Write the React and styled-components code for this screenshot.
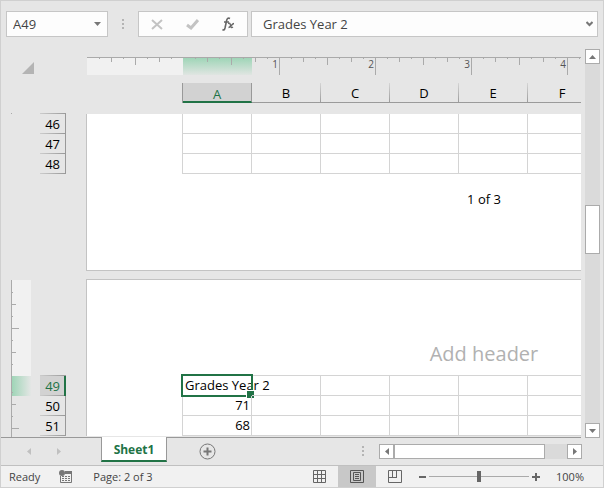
import React, { useState } from 'react'
import styled, { createGlobalStyle, css } from 'styled-components'

const GlobalStyle = createGlobalStyle`
  * {
    box-sizing: border-box;
  }
  body {
    margin: 0;
    background: #e6e6e6;
    color: #000;
    font-family: 'Open Sans', 'Noto Sans', sans-serif;
    font-size: 13px;
  }
  button, input {
    font: inherit;
    color: inherit;
    margin: 0;
    padding: 0;
    border: none;
    background: none;
  }
`

const Window = styled.div`
  display: flex;
  flex-direction: column;
  height: 100vh;
  border: 1px solid #d0d0d0;
  overflow: hidden;
`

/* formula bar */

const FormulaBar = styled.div`
  display: flex;
  flex: none;
  padding: 10px 5px 0;
`
const Box = styled.div`
  display: flex;
  align-items: center;
  height: 26px;
  background: #fdfdfd;
  border: 1px solid #c6c6c6;
  color: #444;
`
const NameBox = styled(Box)`
  width: 102px;
  padding: 0 6px;
`
const ActionBox = styled(Box)`
  width: 110px;
  justify-content: space-between;
  padding: 0 12px;
  margin-right: 3px;
`
const FormulaBox = styled(Box)`
  flex: 1;
  min-width: 0;
  padding: 0 4px 0 11px;
`
const TextInput = styled.input`
  flex: 1;
  width: 0;
  outline: none;
`
const IconButton = styled.button`
  display: flex;
  align-items: center;
  justify-content: center;
  flex: none;
`
const Dots = styled.span`
  width: 2px;
  height: 11px;
  margin: 8px 14px 0;
  background: repeating-linear-gradient(#b4b4b4 0 2px, transparent 2px 4px);
`

/* workspace */

const Workspace = styled.div`
  display: flex;
  flex: 1;
  min-height: 0;
`
const SheetArea = styled.div`
  flex: 1;
  min-width: 0;
  padding-top: 20px;
  border-bottom: 1px solid #999;
  overflow: hidden;
`
const Heading = styled.div`
  display: flex;
  margin-bottom: 10px;
`
const Corner = styled.div`
  flex: none;
  width: 86px;
  padding: 5px 0 0 21px;
`
const HeadingTracks = styled.div`
  flex: 1;
  min-width: 0;
  overflow: hidden;
`
const Ruler = styled.div`
  display: flex;
  height: 18px;
  margin-bottom: 8px;
  border-top: 1px solid #aaa;
`
const Inch = styled.div`
  flex: none;
  width: 96px;
  padding-right: 1px;
  text-align: right;
  font-size: 10px;
  line-height: 12px;
  color: #555;
  border-left: ${props => props.$mark ? '1px solid #aaa' : 'none'};
  background-color: ${props => props.$margin ? '#f1f1f1' : 'transparent'};
  background-image:
    linear-gradient(#aaa, #aaa), linear-gradient(#aaa, #aaa),
    linear-gradient(#aaa, #aaa), linear-gradient(#aaa, #aaa),
    linear-gradient(#aaa, #aaa), linear-gradient(#aaa, #aaa),
    linear-gradient(#aaa, #aaa), linear-gradient(#9fd5b7, #e0e5e2);
  background-origin: border-box;
  background-repeat: no-repeat;
  background-size:
    1px 1px, 1px 4px, 1px 1px, 1px 7px, 1px 1px, 1px 4px, 1px 1px,
    ${props => props.$active ? '69px 17px' : '0 0'};
  background-position: 12px 0, 24px 0, 36px 0, 48px 0, 60px 0, 72px 0, 84px 0, 0 0;
`
const ColumnHeaders = styled.div`
  display: flex;
  margin-left: 95px;
  height: 20px;
  border-left: 1px solid #999;
`
const ColumnHeader = styled.button`
  flex: none;
  width: 69px;
  padding-top: 1px;
  line-height: 18px;
  border-right: 1px solid;
  border-bottom: 1px solid #999;
  border-image: linear-gradient(#d8d8d8, #999) 1;
  ${props => props.$active && css`
    padding-top: 2px;
    color: #217346;
    background: #d2d2d2;
    border-image: none;
    border-right-color: #999;
    border-bottom: 2px solid #217346;
  `}
`

const PageRow = styled.div`
  display: flex;
  align-items: flex-start;
`
const RulerGutter = styled.div`
  flex: none;
  width: 39px;
  padding: ${props => props.$first ? '0' : '1px'} 0 0 10px;
`
const SideRuler = styled.div`
  width: 20px;
  border-left: 1px solid #aaa;
  height: ${props => props.$collapsed ? '1px' : 'auto'};
`
const SideInch = styled.div`
  height: 96px;
  background-color: ${props => props.$margin ? '#f1f1f1' : 'transparent'};
  background-image:
    linear-gradient(#aaa, #aaa), linear-gradient(#aaa, #aaa),
    linear-gradient(#aaa, #aaa), linear-gradient(#aaa, #aaa),
    linear-gradient(#aaa, #aaa), linear-gradient(#aaa, #aaa),
    linear-gradient(#aaa, #aaa);
  background-repeat: no-repeat;
  background-size: 1px 1px, 4px 1px, 1px 1px, 7px 1px, 1px 1px, 4px 1px, 1px 1px;
  background-position: 0 12px, 0 24px, 0 36px, 0 48px, 0 60px, 0 72px, 0 84px;
`
const SideBody = styled.div`
  padding-top: 4px;
  background: linear-gradient(to right, #9fd5b7, #e4e6e5) no-repeat;
  background-size: 100% 20px;
`
const RowHeaders = styled.div`
  display: flex;
  flex-direction: column;
  flex: none;
  width: 26px;
  margin: ${props => props.$first ? '0' : '96px'} 20px 0 0;
  padding-top: 1px;
  background: linear-gradient(to right, #ccc, #999) no-repeat;
  background-size: 100% 1px;
`
const RowHeader = styled.button`
  height: 20px;
  padding-right: 5px;
  line-height: 20px;
  text-align: right;
  border-right: 1px solid #999;
  background: linear-gradient(to right, #ccc, #999) no-repeat bottom;
  background-size: 100% 1px;
  ${props => props.$active && css`
    padding-right: 4px;
    color: #217346;
    border-right: 2px solid #217346;
    background-color: #d2d2d2;
  `}
`
const PaperClip = styled.div`
  flex: 1;
  min-width: 0;
  margin-bottom: 8px;
  padding-top: ${props => props.$first ? '1px' : '0'};
  overflow: hidden;
`
const Paper = styled.div`
  width: 796px;
  background: #fff;
  border: 1px solid #c3c3c3;
  border-width: ${props => props.$first ? '0 1px 1px' : '1px 1px 0'};
`
const PageHeader = styled.div`
  height: 95px;
  padding-top: 59px;
  font-size: 20px;
  line-height: 30px;
  text-align: center;
  color: #b1b1b1;
`
const PageFooter = styled.div`
  height: 96px;
  padding-top: 15px;
  line-height: 20px;
  text-align: center;
`
const Grid = styled.table`
  table-layout: fixed;
  width: 415px;
  margin-left: 95px;
  border-spacing: 0;
  border-left: 1px solid #d4d4d4;
  border-top: ${props => props.$first ? 'none' : '1px solid #d4d4d4'};
`
const Cell = styled.td`
  position: relative;
  height: 20px;
  padding: 0 1px 0 2px;
  line-height: 19px;
  white-space: nowrap;
  text-align: ${props => props.$number ? 'right' : 'left'};
  border-right: 1px solid #d4d4d4;
  border-bottom: 1px solid #d4d4d4;
`
const Selection = styled.span`
  position: absolute;
  inset: -2px;
  border: 2px solid #217346;
  pointer-events: none;
  &::after {
    content: '';
    position: absolute;
    right: -4px;
    bottom: -4px;
    width: 7px;
    height: 7px;
    background: #217346;
    border: 1px solid #fff;
  }
`

/* scroll bars */

const ScrollBar = styled.div`
  display: flex;
  flex: none;
  flex-direction: ${props => props.$horizontal ? 'row' : 'column'};
  background: #dadada;
  ${props => props.$horizontal ? css`
    width: 203px;
    height: 15px;
    margin: 6px 21px 0 1px;
  ` : css`
    width: 15px;
    margin: 12px 3px 0 4px;
  `}
`
const ScrollButton = styled(IconButton)`
  width: 15px;
  height: 15px;
  background: #fff;
  border: 1px solid #ababab;
`
const Thumb = styled.div`
  flex: none;
  background: #fff;
  border: 1px solid #ababab;
  ${props => props.$horizontal ? 'width: 151px;' : 'height: 49px;'}
`
const Track = styled.div`
  flex: ${props => props.$grow};
`

/* bottom bars */

const SheetBar = styled.div`
  display: flex;
  flex: none;
  height: 28px;
  border-bottom: 1px solid #c0c0c0;
`
const SheetNav = styled.div`
  display: flex;
  width: 100px;
  padding: 0 40px 1px 26px;
  justify-content: space-between;
`
const Tab = styled.button`
  position: relative;
  height: 25px;
  width: 66px;
  margin-top: -1px;
  padding-top: 2px;
  font-weight: bold;
  font-size: 12px;
  color: #217346;
  background: #fff;
  border-left: 1px solid #999;
  border-right: 1px solid #999;
  border-bottom: 2px solid #217346;
`
const AddButton = styled(IconButton)`
  height: 26px;
  margin: 0 auto 0 32px;
`
const StatusBar = styled.div`
  display: flex;
  align-items: center;
  flex: none;
  height: 21px;
  padding: 0 19px 0 8px;
  background: #f1f1f1;
  color: #444;
  font-size: 11px;
`
const MacroButton = styled(IconButton)`
  margin: 0 21px 0 19px;
`
const Views = styled.div`
  display: flex;
  align-self: stretch;
  margin: 0 4px 0 auto;
`
const ViewButton = styled(IconButton)`
  width: 38px;
  background: ${props => props.$active ? '#c8c8c8' : 'none'};
`
const ZoomButton = styled(IconButton)`
  width: 9px;
  height: 20px;
`
const ZoomSlider = styled.input`
  appearance: none;
  width: 100px;
  height: 12px;
  margin: 0 2px;
  background: linear-gradient(#aaa, #aaa) no-repeat center;
  background-size: 100% 1px;
  &::-webkit-slider-thumb {
    appearance: none;
    width: 4px;
    height: 11px;
    background: #666;
  }
`
const ZoomLabel = styled.span`
  width: 28px;
  margin-left: 16px;
`

const arrows = {
  up: '0,4 7,4 3.5,0',
  down: '0,0 7,0 3.5,4',
  left: '4,0 4,7 0,3.5',
  right: '0,0 0,7 4,3.5'
}

const Arrow = ({ to, color = '#777' }) => {
  const flat = to === 'up' || to === 'down'
  return (
    <svg width={flat ? 7 : 4} height={flat ? 4 : 7} aria-hidden='true'>
      <polygon points={arrows[to]} fill={color} />
    </svg>
  )
}

const GridIcon = () => (
  <svg width='13' height='13' fill='none' stroke='#666' aria-hidden='true'>
    <path d='M.5 .5h12v12H.5zM4.5 0v13M8.5 0v13M0 4.5h13M0 8.5h13' />
  </svg>
)

const LayoutIcon = () => (
  <svg width='14' height='13' fill='none' stroke='#555' aria-hidden='true'>
    <path d='M.5 .5h13v12H.5zM3.5 2.5h7v8h-7zM5 4.5h4M5 6.5h4M5 8.5h4' />
  </svg>
)

const BreakIcon = () => (
  <svg width='14' height='13' fill='none' stroke='#666' aria-hidden='true'>
    <path d='M.5 .5h13v12H.5zM4.5 0v7M8.5 0v7M1 7.5h8' />
  </svg>
)

const MacroIcon = () => (
  <svg width='13' height='13' aria-hidden='true'>
    <path d='M6 1h7v3H6z' fill='#777' />
    <path d='M1.5 6v6.5h11V3' fill='none' stroke='#777' />
    <circle cx='3' cy='3' r='3' fill='#777' />
    <path d='M3 6.5h8M3 8.5h8M3 10.5h8' stroke='#777' strokeDasharray='2 1' />
  </svg>
)

const columns = ['A', 'B', 'C', 'D', 'E', 'F']

const pages = [
  { rows: [{ number: 46 }, { number: 47 }, { number: 48 }], footer: '1 of 3' },
  {
    rows: [
      { number: 49, value: 'Grades Year 2' },
      { number: 50, value: 71 },
      { number: 51, value: 68 }
    ],
    header: 'Add header'
  }
]

const Page = ({ page, first, active, onSelect }) => (
  <PageRow>
    <RulerGutter $first={first}>
      <SideRuler $collapsed={first}>
        {!first && <>
          <SideInch $margin />
          <SideBody><SideInch /></SideBody>
        </>}
      </SideRuler>
    </RulerGutter>
    <RowHeaders $first={first}>
      {page.rows.map(row => (
        <RowHeader
          key={row.number}
          $active={row.number === active}
          onClick={() => onSelect(row.number)}
        >
          {row.number}
        </RowHeader>
      ))}
    </RowHeaders>
    <PaperClip $first={first}>
      <Paper $first={first}>
        {page.header && <PageHeader>{page.header}</PageHeader>}
        <Grid $first={first}>
          <tbody>
            {page.rows.map(row => (
              <tr key={row.number}>
                {columns.map((column, index) => (
                  <Cell key={column} $number={typeof row.value === 'number'}>
                    {index === 0 && row.value}
                    {index === 0 && row.number === active && <Selection />}
                  </Cell>
                ))}
              </tr>
            ))}
          </tbody>
        </Grid>
        {page.footer && <PageFooter>{page.footer}</PageFooter>}
      </Paper>
    </PaperClip>
  </PageRow>
)

const App = () => {
  const [active, setActive] = useState(49)
  const [zoom, setZoom] = useState(100)

  const row = pages.flatMap(page => page.rows).find(r => r.number === active)

  return (
    <Window>
      <GlobalStyle />
      <FormulaBar>
        <NameBox>
          <TextInput aria-label='Name box' value={`A${active}`} readOnly />
          <IconButton aria-label='Names'><Arrow to='down' /></IconButton>
        </NameBox>
        <Dots />
        <ActionBox>
          <IconButton aria-label='Cancel'>
            <svg width='12' height='11' fill='none' stroke='#c3c3c3' strokeWidth='2'>
              <path d='M1 1l10 9M11 1L1 10' />
            </svg>
          </IconButton>
          <IconButton aria-label='Enter'>
            <svg width='13' height='11' fill='none' stroke='#c3c3c3' strokeWidth='3'>
              <path d='M1 6l4 3L12 1' />
            </svg>
          </IconButton>
          <IconButton aria-label='Insert function'>
            <svg width='13' height='14' fill='none' stroke='#666'>
              <path d='M8 1.5C6 .5 5 1.5 4.5 4L3 11c-.5 2-1 2.500-2.500 1.500M2 5h5' strokeWidth='1.600' />
              <path d='M6 6.500c2-1 2 0 2.500 2s1 2.500 2.500 1.500M12 6.500c-2 0-3.500 4-5.500 4' strokeWidth='1.400' />
            </svg>
          </IconButton>
        </ActionBox>
        <FormulaBox>
          <TextInput aria-label='Formula bar' value={row.value || ''} readOnly />
          <IconButton aria-label='Expand formula bar'>
            <svg width='7' height='6' fill='none' stroke='#777' strokeWidth='2'>
              <path d='M.5 1l3 3 3-3' />
            </svg>
          </IconButton>
        </FormulaBox>
      </FormulaBar>

      <Workspace>
        <SheetArea>
          <Heading>
            <Corner>
              <IconButton aria-label='Select all'>
                <svg width='12' height='12'><polygon points='12,0 12,12 0,12' fill='#b4b4b4' /></svg>
              </IconButton>
            </Corner>
            <HeadingTracks>
              <Ruler>
                <Inch $margin />
                <Inch $active>1</Inch>
                <Inch $mark>2</Inch>
                <Inch $mark>3</Inch>
                <Inch $mark>4</Inch>
                <Inch $mark />
              </Ruler>
              <ColumnHeaders>
                {columns.map(column => (
                  <ColumnHeader key={column} $active={column === 'A'}>{column}</ColumnHeader>
                ))}
              </ColumnHeaders>
            </HeadingTracks>
          </Heading>
          {pages.map((page, index) => (
            <Page
              key={index}
              page={page}
              first={index === 0}
              active={active}
              onSelect={setActive}
            />
          ))}
        </SheetArea>
        <ScrollBar>
          <ScrollButton aria-label='Scroll up'><Arrow to='up' /></ScrollButton>
          <Track $grow={141} />
          <Thumb />
          <Track $grow={169} />
          <ScrollButton aria-label='Scroll down'><Arrow to='down' /></ScrollButton>
        </ScrollBar>
      </Workspace>

      <SheetBar>
        <SheetNav>
          <IconButton aria-label='Previous sheet'><Arrow to='left' color='#c0c0c0' /></IconButton>
          <IconButton aria-label='Next sheet'><Arrow to='right' color='#c0c0c0' /></IconButton>
        </SheetNav>
        <Tab>Sheet1</Tab>
        <AddButton aria-label='New sheet'>
          <svg width='17' height='17' fill='none' stroke='#777'>
            <circle cx='8.5' cy='8.5' r='7.5' />
            <path d='M8.5 4.500v8M4.500 8.500h8' strokeWidth='2' />
          </svg>
        </AddButton>
        <Dots />
        <ScrollBar $horizontal>
          <ScrollButton aria-label='Scroll left'><Arrow to='left' /></ScrollButton>
          <Thumb $horizontal />
          <Track $grow={1} />
          <ScrollButton aria-label='Scroll right'><Arrow to='right' /></ScrollButton>
        </ScrollBar>
      </SheetBar>

      <StatusBar>
        <span>Ready</span>
        <MacroButton aria-label='Record macro'><MacroIcon /></MacroButton>
        <span>Page: 2 of 3</span>
        <Views>
          <ViewButton aria-label='Normal'><GridIcon /></ViewButton>
          <ViewButton aria-label='Page layout' $active><LayoutIcon /></ViewButton>
          <ViewButton aria-label='Page break preview'><BreakIcon /></ViewButton>
        </Views>
        <ZoomButton aria-label='Zoom out' onClick={() => setZoom(zoom - 10)}>
          <svg width='7' height='2'><path d='M0 1h7' stroke='#666' strokeWidth='2' /></svg>
        </ZoomButton>
        <ZoomSlider
          type='range'
          aria-label='Zoom'
          min='10'
          max='190'
          value={zoom}
          onChange={event => setZoom(Number(event.target.value))}
        />
        <ZoomButton aria-label='Zoom in' onClick={() => setZoom(zoom + 10)}>
          <svg width='8' height='8'><path d='M4 0v8M0 4h8' stroke='#666' strokeWidth='2' /></svg>
        </ZoomButton>
        <ZoomLabel>{zoom}%</ZoomLabel>
      </StatusBar>
    </Window>
  )
}

export default App
